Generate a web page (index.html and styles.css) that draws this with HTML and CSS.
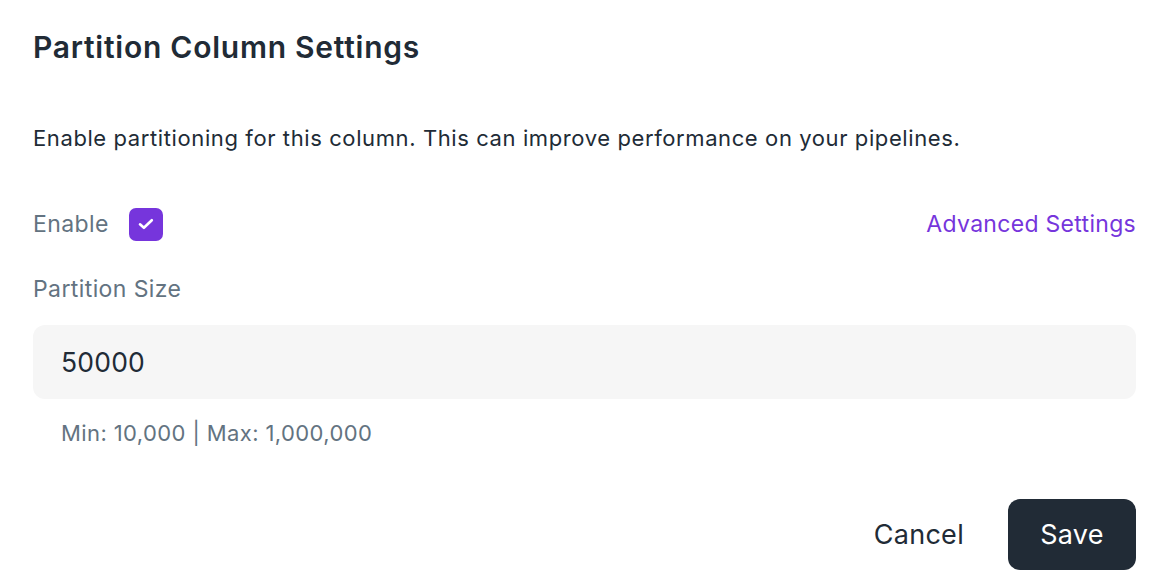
FILE: index.html
```html
<!DOCTYPE html>
<html>
<head>
<meta charset="utf-8">
<link rel="stylesheet" href="styles.css">
</head>
<body>
<div class="dialog">
  <h1 class="title">Partition Column Settings</h1>
  <p class="desc">Enable partitioning for this column. This can improve performance on your pipelines.</p>
  <div class="enable-row">
    <label class="enable">
      <span class="label-text">Enable</span>
      <span class="checkbox">
        <svg width="16" height="12" viewBox="0 0 16 12"><path d="M2 6.3 L5.9 9.8 L13.8 2.2" fill="none" stroke="#fff" stroke-width="2.6" stroke-linecap="round" stroke-linejoin="round"/></svg>
      </span>
    </label>
    <a class="advanced">Advanced Settings</a>
  </div>
  <div class="field-label">Partition Size</div>
  <div class="input">50000</div>
  <div class="help">Min: 10,000 | Max: 1,000,000</div>
  <div class="actions">
    <button class="btn-cancel">Cancel</button>
    <button class="btn-save">Save</button>
  </div>
</div>
</body>
</html>
```
FILE: styles.css
```css
* { box-sizing: border-box; }
html, body { margin: 0; padding: 0; background: #fff; }
body { font-family: Inter, "Noto Sans", sans-serif; color: #212b36; }
.dialog { padding: 27px 36px 0 33px; display: flex; flex-direction: column; }
.title { margin: 0; font-size: 30px; font-weight: 600; line-height: 40px; letter-spacing: 0.75px; color: #212b36; }
.desc { margin: 57px 0 0; font-size: 22px; line-height: 28px; letter-spacing: 0.6px; color: #212b36; }
.enable-row { margin-top: 55px; display: flex; justify-content: space-between; align-items: center; height: 34px; }
.enable { display: flex; align-items: center; gap: 20px; }
.label-text { font-size: 23px; letter-spacing: 0.4px; color: #637381; }
.checkbox { width: 34px; height: 33px; border-radius: 7px; background: #7635dc; display: flex; align-items: center; justify-content: center; }
.advanced { font-size: 23px; letter-spacing: 0.3px; color: #7635dc; }
.field-label { margin-top: 34px; font-size: 23px; line-height: 28px; letter-spacing: 0.4px; color: #637381; }
.input { margin-top: 22px; height: 74px; border-radius: 12px; background: #f6f6f6; padding: 0 28px; display: flex; align-items: center; font-size: 26.5px; letter-spacing: 0.2px; color: #212b36; }
.help { margin-top: 20px; padding-left: 28px; font-size: 22px; line-height: 28px; letter-spacing: 0.4px; color: #637381; }
.actions { margin-top: 52px; display: flex; justify-content: flex-end; align-items: center; gap: 44px; }
button { font-family: inherit; border: 0; cursor: pointer; }
.btn-cancel { background: none; font-size: 27px; letter-spacing: 0.3px; color: #212b36; padding: 0; }
.btn-save { background: #212b36; color: #fff; font-size: 27px; letter-spacing: 0.3px; width: 128px; height: 71px; border-radius: 12px; }
```
